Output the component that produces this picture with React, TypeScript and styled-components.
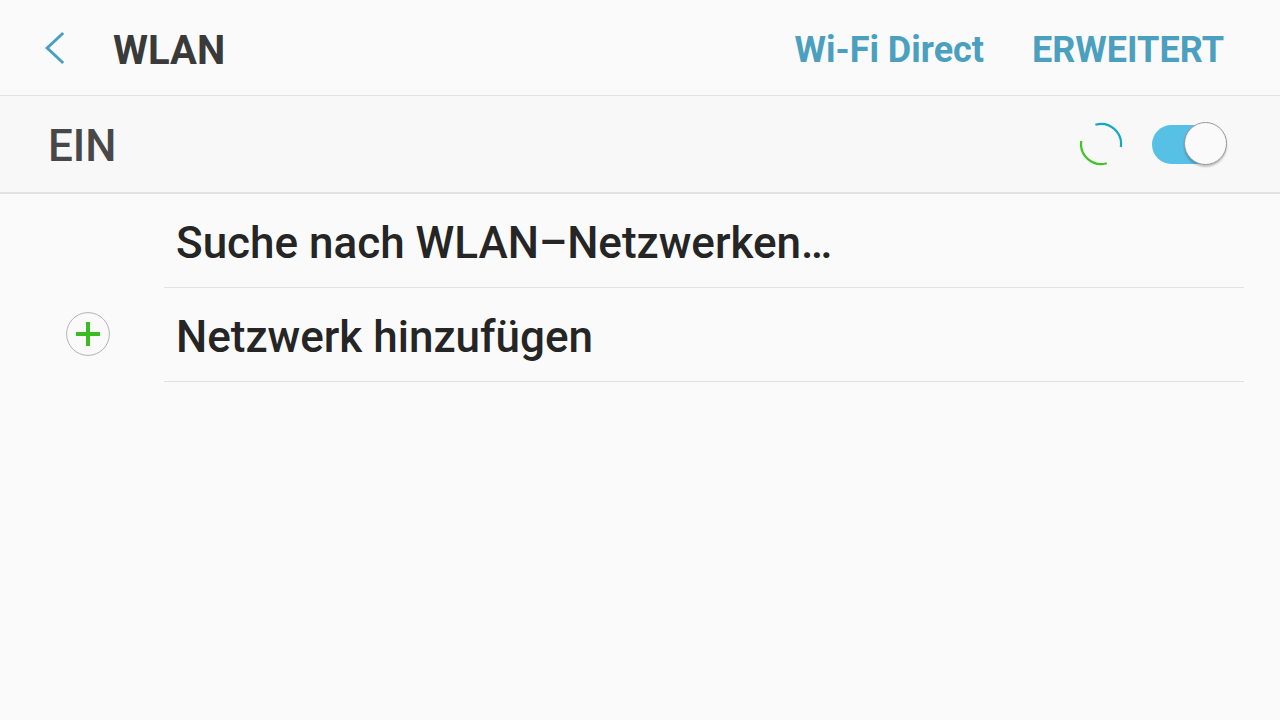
import React, { useState } from "react";
import styled, { createGlobalStyle } from "styled-components";

const GlobalStyle = createGlobalStyle`
  *, *::before, *::after { box-sizing: border-box; }
  body {
    margin: 0;
    background: #fafafa;
    color: #252525;
    font-family: Roboto, "Noto Sans", sans-serif;
  }
  button { font: inherit; color: inherit; background: none; border: 0; padding: 0; margin: 0; cursor: pointer; }
`;

const Page = styled.div`
  min-height: 100vh;
  display: flex;
  flex-direction: column;
`;

const TopBar = styled.header`
  display: flex;
  align-items: center;
  height: 96px;
  padding: 4px 56px 0 44px;
  border-bottom: 1px solid #e2e2e2;
`;

const BackButton = styled.button`
  display: flex;
  width: 69px;
  padding-bottom: 4px;
`;

const Title = styled.h1`
  flex: 1;
  margin: 0;
  padding-top: 2px;
  font-size: 40px;
  line-height: 48px;
  font-weight: 700;
  color: #3a3a3a;
`;

const Actions = styled.nav`
  display: flex;
  gap: 48px;
`;

const ActionButton = styled.button`
  && {
    font-size: 36px;
    line-height: 44px;
    font-weight: 700;
    color: #4b9fbf;
  }
`;

const StatusBar = styled.section`
  display: flex;
  align-items: center;
  height: 98px;
  padding: 0 52px 0 48px;
  background: #f8f8f8;
  border-bottom: 2px solid #e2e2e2;
`;

const StatusLabel = styled.label`
  flex: 1;
  padding-top: 4px;
  font-size: 44px;
  line-height: 52px;
  font-weight: 500;
  color: #484848;
`;

const Spinner = styled.svg`
  margin-right: 28px;
`;

const Switch = styled.input`
  appearance: none;
  position: relative;
  width: 76px;
  height: 44px;
  margin: 0;
  cursor: pointer;

  &::before {
    content: "";
    position: absolute;
    inset: 3px 4px 2px 0;
    border-radius: 20px;
    background: #b8b8b8;
  }
  &::after {
    content: "";
    position: absolute;
    top: 0;
    left: 0;
    width: 43px;
    height: 43px;
    border-radius: 50%;
    border: 1px solid #999;
    background: #fafafa;
    box-shadow: 0 2px 2px rgba(0, 0, 0, 0.22);
  }
  &:checked::before { background: #57c0e5; }
  &:checked::after { left: 32px; }
`;

const NetworkList = styled.ul`
  list-style: none;
  margin: 0;
  padding: 0 36px 0 0;
`;

const NetworkRow = styled.li`
  display: flex;
  height: 94px;
`;

const IconSlot = styled.span`
  width: 164px;
  padding: 0 0 2px 66px;
  display: flex;
  align-items: center;
`;

const RowText = styled.span`
  flex: 1;
  display: flex;
  align-items: center;
  padding: 4px 12px 0;
  border-bottom: 1px solid #e2e2e2;
  font-size: 44px;
  line-height: 52px;
  font-weight: 500;
`;

const RowButton = styled.button`
  display: flex;
  flex: 1;
  text-align: left;
`;

export default function App() {
  const [on, setOn] = useState(true);
  return (
    <Page>
      <GlobalStyle />
      <TopBar>
        <BackButton type="button" aria-label="Zurück">
          <svg width="22" height="34" viewBox="0 0 22 34" fill="none" stroke="#4b9fbf" strokeWidth="3">
            <path d="M19.2 2 3.2 17l16 15" />
          </svg>
        </BackButton>
        <Title>WLAN</Title>
        <Actions>
          <ActionButton type="button">Wi-Fi Direct</ActionButton>
          <ActionButton type="button">ERWEITERT</ActionButton>
        </Actions>
      </TopBar>
      <StatusBar>
        <StatusLabel htmlFor="wlan">{on ? "EIN" : "AUS"}</StatusLabel>
        <Spinner width="44" height="44" viewBox="0 0 44 44" fill="none" strokeWidth="2.2" aria-hidden="true">
          <path d="M15.4 2.8A20 20 0 0 1 40.8 25" stroke="#12a9c4" />
          <path d="M1.3 19A20 20 0 0 0 26.8 41.2" stroke="#41c526" />
        </Spinner>
        <Switch id="wlan" type="checkbox" role="switch" checked={on} onChange={(e) => setOn(e.target.checked)} />
      </StatusBar>
      <NetworkList>
        <NetworkRow>
          <IconSlot />
          <RowText>Suche nach WLAN–Netzwerken…</RowText>
        </NetworkRow>
        <NetworkRow>
          <RowButton type="button">
            <IconSlot>
              <svg width="44" height="44" viewBox="0 0 44 44" fill="none" aria-hidden="true">
                <circle cx="22" cy="22" r="21.4" stroke="#b4b4b4" />
                <path d="M22 10v24M10 22h24" stroke="#3abb20" strokeWidth="4" />
              </svg>
            </IconSlot>
            <RowText>Netzwerk hinzufügen</RowText>
          </RowButton>
        </NetworkRow>
      </NetworkList>
    </Page>
  );
}
